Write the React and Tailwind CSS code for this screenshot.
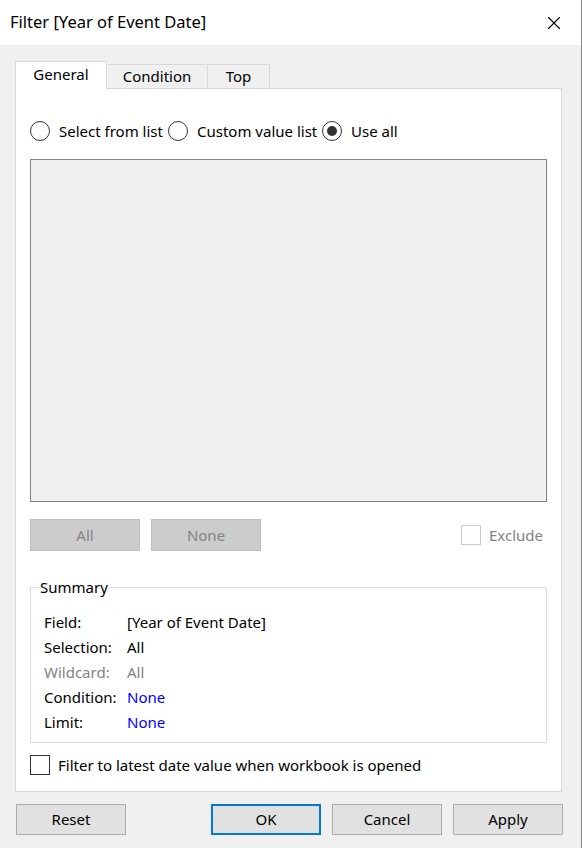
import { X } from 'lucide-react'

const font = { fontFamily: '"Noto Sans", "Open Sans", sans-serif' }

function Radio({ label, checked, width }) {
  return (
    <div className="flex items-center shrink-0" style={{ width }}>
      <span className="w-5 h-5 rounded-full border border-[#333] bg-white flex items-center justify-center">
        {checked && <span className="w-[10px] h-[10px] rounded-full bg-[#333]" />}
      </span>
      <span className="ml-[9px] text-black">{label}</span>
    </div>
  )
}

function Row({ label, value, labelClass = 'text-black', valueClass = 'text-black' }) {
  return (
    <div className="flex h-[25px] items-center">
      <span className={`w-[83px] ${labelClass}`}>{label}</span>
      <span className={valueClass}>{value}</span>
    </div>
  )
}

export default function App() {
  return (
    <div className="w-[582px] h-[848px] bg-[#f0f0f0] text-[15px] leading-none flex flex-col border-r border-[#888]" style={font}>
      {/* title bar */}
      <div className="h-[45px] bg-white flex items-center justify-between pl-[10px] pr-[16px] shrink-0">
        <span className="text-[16.5px] text-black">Filter [Year of Event Date]</span>
        <X size={22} strokeWidth={1.2} className="text-black" />
      </div>

      {/* tabs */}
      <div className="flex items-end ml-[15px] mt-[16px] h-[28px] relative z-10">
        <div className="w-[92px] h-[28px] bg-white border border-b-0 border-[#d9d9d9] flex items-center justify-center pb-[2px] text-black">General</div>
        <div className="w-[101px] h-[25px] border border-l-0 border-[#d9d9d9] flex items-center justify-center text-black">Condition</div>
        <div className="w-[62px] h-[25px] border border-l-0 border-[#d9d9d9] flex items-center justify-center text-black">Top</div>
      </div>

      {/* panel */}
      <div className="ml-[15px] w-[547px] h-[704px] -mt-px bg-white border border-[#d9d9d9] px-[14px] flex flex-col shrink-0">
        <div className="flex items-center mt-[32px]">
          <Radio label="Select from list" width={138} />
          <Radio label="Custom value list" width={154} />
          <Radio label="Use all" checked width={100} />
        </div>

        <div className="mt-[18px] h-[343px] w-[517px] bg-[#f0f0f0] border border-[#828282]" />

        <div className="mt-[17px] flex items-center">
          <button className="w-[110px] h-[32px] bg-[#cccccc] border border-[#bfbfbf] text-[#838383]">All</button>
          <button className="ml-[11px] w-[110px] h-[32px] bg-[#cccccc] border border-[#bfbfbf] text-[#838383]">None</button>
          <div className="ml-auto mr-[4px] flex items-center">
            <span className="w-5 h-5 border border-[#cccccc] bg-white" />
            <span className="ml-[8px] text-[#838383]">Exclude</span>
          </div>
        </div>

        <fieldset className="mt-[29px] w-[517px] h-[163px] border border-[#dcdcdc] px-[13px] pt-[15px]">
          <legend className="ml-[-5px] px-[1px] text-black">Summary</legend>
          <Row label="Field:" value="[Year of Event Date]" />
          <Row label="Selection:" value="All" />
          <Row label="Wildcard:" value="All" labelClass="text-[#838383]" valueClass="text-[#838383]" />
          <Row label="Condition:" value="None" valueClass="text-[#0000ff]" />
          <Row label="Limit:" value="None" valueClass="text-[#0000ff]" />
        </fieldset>

        <div className="mt-[12px] flex items-center">
          <span className="w-5 h-5 border border-[#333] bg-white" />
          <span className="ml-[8px] text-black">Filter to latest date value when workbook is opened</span>
        </div>
      </div>

      {/* footer buttons */}
      <div className="flex mt-[12px] ml-[16px]">
        <button className="w-[110px] h-[31px] bg-[#e1e1e1] border border-[#adadad] text-black">Reset</button>
        <button className="ml-[85px] w-[110px] h-[31px] bg-[#e1e1e1] border-2 border-[#0078d7] text-black">OK</button>
        <button className="ml-[11px] w-[110px] h-[31px] bg-[#e1e1e1] border border-[#adadad] text-black">Cancel</button>
        <button className="ml-[11px] w-[110px] h-[31px] bg-[#e1e1e1] border border-[#adadad] text-black">Apply</button>
      </div>
    </div>
  )
}
